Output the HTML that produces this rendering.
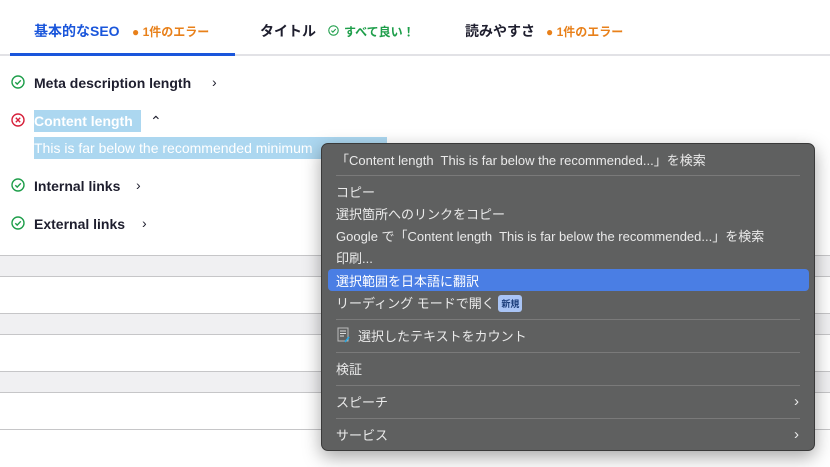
<!DOCTYPE html>
<html><head><meta charset="utf-8"><style>
*{margin:0;padding:0;box-sizing:border-box}
body{width:830px;height:467px;overflow:hidden;background:#fff;font-family:"Liberation Sans","Noto Sans CJK JP",sans-serif;position:relative}
.a{position:absolute;white-space:nowrap}
.tab{font-size:14px;font-weight:bold;top:21px}
.st{font-size:12px;font-weight:bold;top:23px}
.row{font-size:14px;font-weight:bold;color:#1e1e2e}
.line{position:absolute;left:0;width:830px;height:1px;background:#c6c6c8}
.band{position:absolute;left:0;width:830px;height:20px;background:#f0f0f2}
.menu{position:absolute;left:321px;top:143px;width:494px;height:308px;background:#5f6060;border:1px solid #3a3a3a;border-radius:7px;box-shadow:0 6px 18px rgba(0,0,0,.35);color:#eaeaea;font-size:13px}
.mi{position:absolute;left:14px;white-space:nowrap}
.sep{position:absolute;left:14px;right:14px;height:1px;background:#7a7a7a}
</style></head><body>
<div class="a tab" style="left:34px;color:#1a56db">基本的なSEO</div>
<div class="a st" style="left:132px;color:#e8801a">● 1件のエラー</div>
<div class="a tab" style="left:260px;color:#1e1e2e">タイトル</div>
<svg class="a" style="left:328px;top:25px" width="11" height="11" viewBox="0 0 14 14"><circle cx="7" cy="7" r="6" fill="none" stroke="#1e9e4a" stroke-width="1.4"/><path d="M4.3 7.2l1.9 1.9 3.6-3.8" fill="none" stroke="#1e9e4a" stroke-width="1.4"/></svg>
<div class="a st" style="left:344px;color:#1e9e4a">すべて良い！</div>
<div class="a tab" style="left:465px;color:#1e1e2e">読みやすさ</div>
<div class="a st" style="left:546px;color:#e8801a">● 1件のエラー</div>
<div class="a" style="left:0;top:54px;width:830px;height:2px;background:#e2e2e6"></div>
<div class="a" style="left:10px;top:53px;width:225px;height:3px;background:#1a56db"></div>

<svg class="a" style="left:11px;top:75px" width="14" height="14" viewBox="0 0 14 14"><circle cx="7" cy="7" r="6" fill="none" stroke="#1e9e4a" stroke-width="1.4"/><path d="M4.3 7.2l1.9 1.9 3.6-3.8" fill="none" stroke="#1e9e4a" stroke-width="1.4"/></svg>
<div class="a row" style="left:34px;top:75px">Meta description length</div>
<div class="a row" style="left:212px;top:74px;font-weight:normal">›</div>

<div class="a" style="left:34px;top:110px;width:107px;height:22px;background:#acd7f0"></div>
<svg class="a" style="left:11px;top:113px" width="14" height="14" viewBox="0 0 14 14"><circle cx="7" cy="7" r="6" fill="none" stroke="#d6203a" stroke-width="1.4"/><path d="M4.8 4.8l4.4 4.4M9.2 4.8l-4.4 4.4" stroke="#d6203a" stroke-width="1.4"/></svg>
<div class="a row" style="left:34px;top:113px;color:#fff">Content length</div>
<div class="a row" style="left:150px;top:113px;font-weight:normal">⌃</div>
<div class="a" style="left:34px;top:137px;width:353px;height:22px;background:#acd7f0"></div>
<div class="a" style="left:34px;top:140px;font-size:14px;color:#fff">This is far below the recommended minimum</div>

<svg class="a" style="left:11px;top:178px" width="14" height="14" viewBox="0 0 14 14"><circle cx="7" cy="7" r="6" fill="none" stroke="#1e9e4a" stroke-width="1.4"/><path d="M4.3 7.2l1.9 1.9 3.6-3.8" fill="none" stroke="#1e9e4a" stroke-width="1.4"/></svg>
<div class="a row" style="left:34px;top:178px">Internal links</div>
<div class="a row" style="left:136px;top:177px;font-weight:normal">›</div>
<svg class="a" style="left:11px;top:216px" width="14" height="14" viewBox="0 0 14 14"><circle cx="7" cy="7" r="6" fill="none" stroke="#1e9e4a" stroke-width="1.4"/><path d="M4.3 7.2l1.9 1.9 3.6-3.8" fill="none" stroke="#1e9e4a" stroke-width="1.4"/></svg>
<div class="a row" style="left:34px;top:216px">External links</div>
<div class="a row" style="left:142px;top:215px;font-weight:normal">›</div>

<div class="band" style="top:256px"></div><div class="line" style="top:255px"></div><div class="line" style="top:276px"></div>
<div class="band" style="top:314px"></div><div class="line" style="top:313px"></div><div class="line" style="top:334px"></div>
<div class="band" style="top:372px"></div><div class="line" style="top:371px"></div><div class="line" style="top:392px"></div>
<div class="line" style="top:429px"></div>

<div class="menu">
<div class="mi" style="top:6px">「Content length&nbsp; This is far below the recommended...」を検索</div>
<div class="sep" style="top:31px"></div>
<div class="mi" style="top:38px">コピー</div>
<div class="mi" style="top:60px">選択箇所へのリンクをコピー</div>
<div class="mi" style="top:82px">Google で「Content length&nbsp; This is far below the recommended...」を検索</div>
<div class="mi" style="top:104px">印刷...</div>
<div style="position:absolute;left:6px;right:5px;top:125px;height:22px;background:#4a7ee4;border-radius:4px"></div>
<div class="mi" style="top:127px;color:#fff">選択範囲を日本語に翻訳</div>
<div class="mi" style="top:149px">リーディング モードで開く <span style="display:inline-block;background:#a9c4f5;color:#1b3d7a;font-size:9px;font-weight:bold;padding:2px 3px;border-radius:3px;vertical-align:1px">新規</span></div>
<div class="sep" style="top:175px"></div>
<svg style="position:absolute;left:15px;top:183px" width="14" height="16" viewBox="0 0 14 16"><rect x="1" y="1" width="10" height="13" fill="none" stroke="#bbb"/><path d="M3 4h6M3 6.5h6M3 9h4" stroke="#ddd"/><path d="M8 15l4-5" stroke="#29a8e0" stroke-width="1.6"/></svg>
<div class="mi" style="left:36px;top:182px">選択したテキストをカウント</div>
<div class="sep" style="top:208px"></div>
<div class="mi" style="top:215px">検証</div>
<div class="sep" style="top:241px"></div>
<div class="mi" style="top:248px">スピーチ</div>
<div class="mi" style="left:auto;right:15px;top:249px;font-size:15px">›</div>
<div class="sep" style="top:274px"></div>
<div class="mi" style="top:281px">サービス</div>
<div class="mi" style="left:auto;right:15px;top:282px;font-size:15px">›</div>
</div>
</body></html>
